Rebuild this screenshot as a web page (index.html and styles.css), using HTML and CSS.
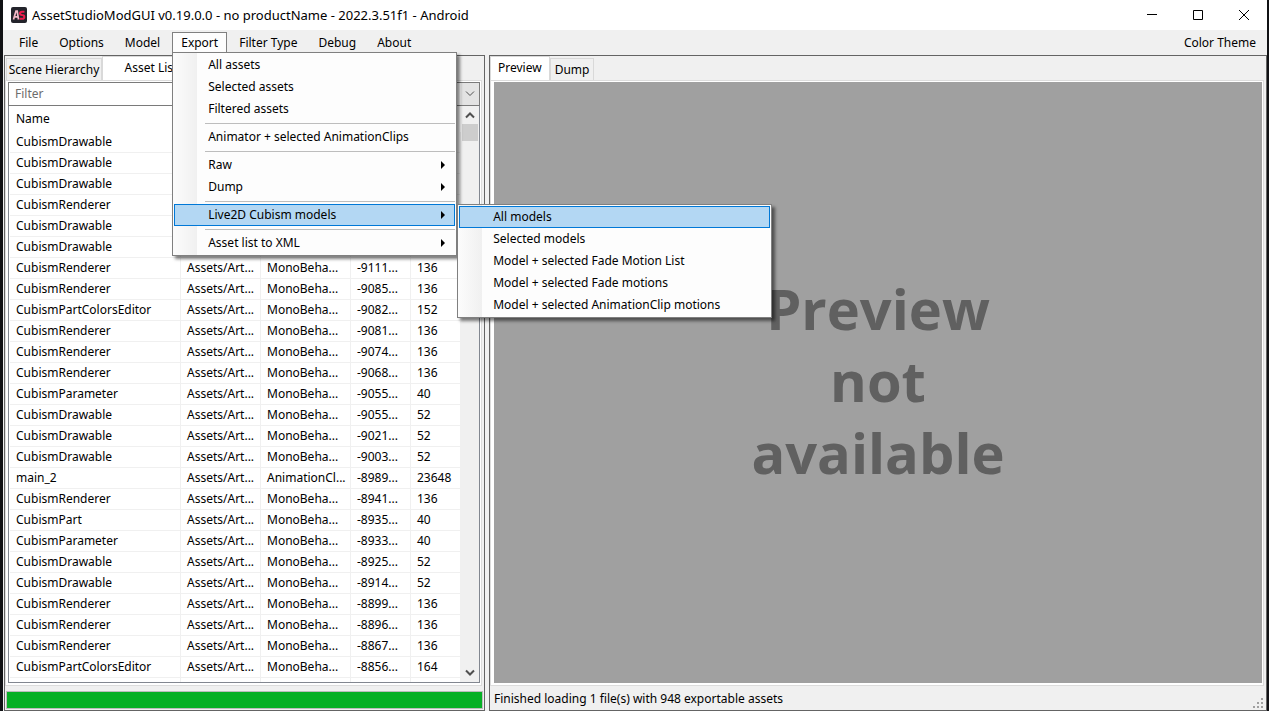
FILE: index.html
```html
<!DOCTYPE html>
<html lang="en">
<head>
  <meta charset="UTF-8">
  <meta name="viewport" content="width=device-width, initial-scale=1.0">
  <title>AssetStudioModGUI</title>
  <link rel="stylesheet" href="styles.css">
</head>
<body>
  <div class="window">
    <header class="title-bar">
      <svg class="logo" viewBox="0 0 16 16" aria-hidden="true">
        <rect width="16" height="16" rx="2" fill="#23242b"/>
        <path d="M2.500 12.500 5 4h1.200l1.300 8.500M3.800 9.800h3.500" fill="none" stroke="#f2b8c6" stroke-width="1.700"/>
        <path d="M13.500 4.700H11q-2 0-2 1.600t2 1.800q2.300 0 2.300 1.800t-2 1.900H8.500" fill="none" stroke="#ee1c4c" stroke-width="2"/>
      </svg>
      <h1>AssetStudioModGUI v0.19.0.0 - no productName - 2022.3.51f1 - Android</h1>
      <div class="window-buttons">
        <button aria-label="Minimize"><svg viewBox="0 0 10 10"><path d="M0 4.500h10"/></svg></button>
        <button aria-label="Maximize"><svg viewBox="0 0 10 10"><path d="M.5.500h9v9h-9z"/></svg></button>
        <button aria-label="Close"><svg viewBox="0 0 10 10"><path d="M0 0l10 10M10 0 0 10"/></svg></button>
      </div>
    </header>

    <nav class="menu-bar">
      <button>File</button>
      <button>Options</button>
      <button>Model</button>
      <div class="menu-holder">
        <button class="open">Export</button>
        <div class="menu export-menu">
          <button>All assets</button>
          <button>Selected assets</button>
          <button>Filtered assets</button>
          <hr>
          <button>Animator + selected AnimationClips</button>
          <hr>
          <button class="has-sub">Raw</button>
          <button class="has-sub">Dump</button>
          <hr>
          <div class="menu-holder">
            <button class="has-sub active">Live2D Cubism models</button>
            <div class="menu sub-menu">
              <button class="active">All models</button>
              <button>Selected models</button>
              <button>Model + selected Fade Motion List</button>
              <button>Model + selected Fade motions</button>
              <button>Model + selected AnimationClip motions</button>
            </div>
          </div>
          <hr>
          <button class="has-sub">Asset list to XML</button>
        </div>
      </div>
      <button>Filter Type</button>
      <button>Debug</button>
      <button>About</button>
      <button class="theme">Color Theme</button>
    </nav>

    <main class="panels">
      <section class="panel left-panel">
        <div class="tabs">
          <button class="tab scene-tab">Scene Hierarchy</button>
          <button class="tab selected list-tab">Asset List</button>
        </div>
        <div class="tab-page">
          <div class="filter">
            <input type="text" placeholder="Filter" aria-label="Filter">
            <button aria-label="Filter history"><svg viewBox="0 0 10 6"><path d="M1 .500 5 4.500 9 .500"/></svg></button>
          </div>
          <div class="list">
            <div class="list-view">
              <table>
                <colgroup>
                  <col class="col-name">
                  <col class="col-container">
                  <col class="col-type">
                  <col class="col-path">
                  <col class="col-size">
                </colgroup>
                <thead>
                  <tr><th>Name</th><th></th><th></th><th></th><th></th></tr>
                </thead>
                <tbody id="assets"></tbody>
              </table>
            </div>
            <div class="scrollbar">
              <button aria-label="Scroll up"><svg viewBox="0 0 10 7"><path d="M1 5.500 5 1.500 9 5.500"/></svg></button>
              <div class="thumb"></div>
              <button class="down" aria-label="Scroll down"><svg viewBox="0 0 10 7"><path d="M1 1.500 5 5.500 9 1.500"/></svg></button>
            </div>
          </div>
        </div>
        <div class="progress"></div>
      </section>

      <section class="panel right-panel">
        <div class="tabs">
          <button class="tab selected preview-tab">Preview</button>
          <button class="tab">Dump</button>
        </div>
        <div class="tab-page preview-page">
          <div class="preview"><p>Preview<br>not<br>available</p></div>
        </div>
        <footer class="status">
          <span>Finished loading 1 file(s) with 948 exportable assets</span>
          <svg class="grip" viewBox="0 0 10 10"><path d="M8 0h2v2H8zM4 4h2v2H4zM8 4h2v2H8zM0 8h2v2H0zM4 8h2v2H4zM8 8h2v2H8z"/></svg>
        </footer>
      </section>
    </main>
  </div>

  <script>
    const assets = [
      ['CubismDrawable'],
      ['CubismDrawable'],
      ['CubismDrawable'],
      ['CubismRenderer'],
      ['CubismDrawable'],
      ['CubismDrawable'],
      ['CubismRenderer', '-9111...', 136],
      ['CubismRenderer', '-9085...', 136],
      ['CubismPartColorsEditor', '-9082...', 152],
      ['CubismRenderer', '-9081...', 136],
      ['CubismRenderer', '-9074...', 136],
      ['CubismRenderer', '-9068...', 136],
      ['CubismParameter', '-9055...', 40],
      ['CubismDrawable', '-9055...', 52],
      ['CubismDrawable', '-9021...', 52],
      ['CubismDrawable', '-9003...', 52],
      ['main_2', '-8989...', 23648, 'AnimationCl...'],
      ['CubismRenderer', '-8941...', 136],
      ['CubismPart', '-8935...', 40],
      ['CubismParameter', '-8933...', 40],
      ['CubismDrawable', '-8925...', 52],
      ['CubismDrawable', '-8914...', 52],
      ['CubismRenderer', '-8899...', 136],
      ['CubismRenderer', '-8896...', 136],
      ['CubismRenderer', '-8867...', 136],
      ['CubismPartColorsEditor', '-8856...', 164],
      ['']
    ];

    document.getElementById('assets').innerHTML = assets.map(([name, path = '', size = '', type = 'MonoBeha...']) => `
      <tr>
        <td>${name}</td>
        <td>${path && 'Assets/Art...'}</td>
        <td>${path && type}</td>
        <td>${path}</td>
        <td>${size}</td>
      </tr>`).join('');
  </script>
</body>
</html>
```
FILE: styles.css
```css
* {
  box-sizing: border-box;
}
body {
  margin: 0;
  height: 100vh;
  padding: 0 2px 0 3px;
  overflow: hidden;
  background: #101114;
  color: #000;
  font-family: "Noto Sans", "Open Sans", sans-serif;
  font-size: 12px;
  line-height: 16px;
}
button, input {
  font: inherit;
  color: inherit;
  margin: 0;
  padding: 0;
  border: none;
  background: none;
}
svg {
  display: block;
}
.window {
  height: 100%;
  display: flex;
  flex-direction: column;
  background: #f0f0f0;
}

/* title bar */
.title-bar {
  display: flex;
  align-items: center;
  flex: none;
  height: 30px;
  padding-left: 8px;
  background: #fff;
}
.logo {
  width: 16px;
  height: 16px;
  margin-right: 5px;
}
h1 {
  margin: 0;
  font-size: 13px;
  font-weight: normal;
}
.window-buttons {
  display: flex;
  margin-left: auto;
}
.window-buttons button {
  width: 46px;
  height: 28px;
  display: flex;
  align-items: center;
  justify-content: center;
}
.window-buttons svg {
  width: 10px;
  height: 10px;
  fill: none;
  stroke: #000;
}

/* menu */
.menu-bar {
  display: flex;
  gap: 3px;
  flex: none;
  height: 25px;
  padding: 2px 2px 2px 7px;
}
.menu-bar > button, .menu-holder > .open {
  height: 21px;
  padding: 0 9px;
  white-space: nowrap;
}
.menu-bar > .theme {
  margin-left: auto;
}
.menu-holder {
  position: relative;
}
.menu-holder > .open {
  border: 1px solid #808080;
  border-bottom: none;
  padding: 0 8px;
  background: #fdfdfd;
}
.menu {
  position: absolute;
  z-index: 2;
  display: flex;
  flex-direction: column;
  padding: 1px;
  border: 1px solid #808080;
  background: linear-gradient(to right, #fcfcfc, #f0f0f0 24px, #fdfdfd 24px);
  box-shadow: 3px 3px 3px rgba(0, 0, 0, 0.500);
}
.export-menu {
  top: 20px;
  left: 0;
  width: 285px;
}
.sub-menu {
  top: 0;
  left: 283px;
  width: 315px;
}
.menu button {
  width: 100%;
  height: 22px;
  padding: 0 0 0 33px;
  border: 1px solid transparent;
  text-align: left;
  white-space: nowrap;
}
.menu button.active {
  border-color: #0078d7;
  background: #b3d7f3;
}
.menu hr {
  width: auto;
  height: 1px;
  margin: 3px 0 2px 31px;
  border: none;
  background: #bdbdbd;
}
.has-sub {
  display: flex;
  align-items: center;
  justify-content: space-between;
}
.has-sub::after {
  content: "";
  margin-right: 9px;
  border: 4px solid transparent;
  border-left-color: #000;
  border-right: none;
}

/* panels */
.panels {
  flex: 1;
  display: grid;
  grid-template-columns: 481fr 778fr;
  grid-template-rows: 100%;
  gap: 4px;
  min-height: 0;
  padding-left: 1px;
}
.panel {
  display: flex;
  flex-direction: column;
  min-width: 0;
  border: 1px solid #646464;
}
.tabs {
  display: flex;
  align-items: flex-end;
  flex: none;
  height: 24px;
}
.tab {
  height: 22px;
  padding: 0 4px;
  border: 1px solid #d9d9d9;
  border-bottom: none;
  white-space: nowrap;
  overflow: hidden;
}
.tab.selected {
  height: 24px;
  padding-bottom: 2px;
  background: #fff;
}
.scene-tab {
  width: 96px;
  margin-left: 1px;
  padding: 0 1px;
}
.list-tab {
  width: 98px;
}
.preview-tab {
  padding: 0 7px;
}
.tab-page {
  flex: 1;
  display: flex;
  flex-direction: column;
  min-height: 0;
  margin-right: 2px;
  padding: 1px;
  border: 1px solid #dcdcdc;
  background: #fff;
}
.left-panel .tab-page {
  padding: 1px 1px 2px 2px;
}
.filter {
  display: flex;
  flex: none;
  height: 24px;
  border: 1px solid #7a7a7a;
}
.filter input {
  flex: 1;
  padding: 0 6px;
}
.filter input::placeholder {
  color: #6d6d6d;
}
.filter button {
  width: 18px;
  display: flex;
  align-items: center;
  justify-content: center;
  background: #e3e3e3;
}
.filter svg, .scrollbar svg {
  width: 10px;
  fill: none;
  stroke: #505050;
}
.scrollbar svg {
  stroke-width: 2;
}
.list {
  flex: 1;
  display: flex;
  min-height: 0;
  border: 1px solid #828790;
  border-top: none;
}
.list-view {
  flex: 1;
  min-width: 0;
  padding-left: 1px;
  overflow: hidden;
}
table {
  width: 100%;
  table-layout: fixed;
  border-collapse: separate;
  border-spacing: 0;
}
.col-container {
  width: 80px;
}
.col-type {
  width: 90px;
}
.col-path {
  width: 60px;
}
.col-size {
  width: 50px;
}
th, td {
  height: 21px;
  padding: 0 0 0 6px;
  text-align: left;
  font-weight: normal;
  white-space: nowrap;
  overflow: hidden;
}
th {
  height: 26px;
}
td {
  border-right: 1px solid #f0f0f0;
  border-bottom: 1px solid #f0f0f0;
}
.scrollbar {
  width: 18px;
  padding: 1px;
  display: flex;
  flex-direction: column;
  background: #f0f0f0;
}
.scrollbar button {
  height: 17px;
  display: flex;
  align-items: center;
  justify-content: center;
}
.scrollbar .down {
  margin-top: auto;
}
.thumb {
  height: 17px;
  background: #cdcdcd;
}
.progress {
  flex: none;
  height: 18px;
  margin: 5px 1px 1px;
  border: 1px solid #bcbcbc;
  background: #06b025;
}

/* preview */
.preview-page {
  padding: 1px 1px 2px 3px;
}
.preview {
  flex: 1;
  display: flex;
  align-items: center;
  justify-content: center;
  padding-bottom: 6px;
  background: #a0a0a0;
  color: #606060;
  font-family: "Open Sans", "Noto Sans", sans-serif;
  font-size: 56px;
  font-weight: bold;
  line-height: 72px;
  text-align: center;
}
.preview p {
  margin: 0;
}
.status {
  flex: none;
  display: flex;
  align-items: center;
  justify-content: space-between;
  height: 24px;
  padding: 4px 3px 2px 4px;
}
.grip {
  width: 10px;
  height: 10px;
  align-self: flex-end;
  fill: #a0a0a0;
}
```
